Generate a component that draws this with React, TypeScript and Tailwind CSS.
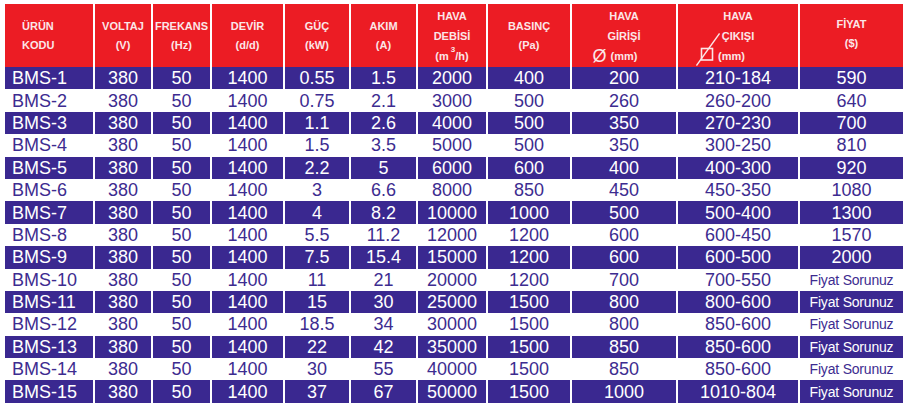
import React from "react";

const cols = "grid grid-cols-[88px_56px_57px_71px_64px_65px_68px_82px_104px_120px_103px] gap-x-[2px]";

const rows: string[][] = [
  ["BMS-1", "380", "50", "1400", "0.55", "1.5", "2000", "400", "200", "210-184", "590"],
  ["BMS-2", "380", "50", "1400", "0.75", "2.1", "3000", "500", "260", "260-200", "640"],
  ["BMS-3", "380", "50", "1400", "1.1", "2.6", "4000", "500", "350", "270-230", "700"],
  ["BMS-4", "380", "50", "1400", "1.5", "3.5", "5000", "500", "350", "300-250", "810"],
  ["BMS-5", "380", "50", "1400", "2.2", "5", "6000", "600", "400", "400-300", "920"],
  ["BMS-6", "380", "50", "1400", "3", "6.6", "8000", "850", "450", "450-350", "1080"],
  ["BMS-7", "380", "50", "1400", "4", "8.2", "10000", "1000", "500", "500-400", "1300"],
  ["BMS-8", "380", "50", "1400", "5.5", "11.2", "12000", "1200", "600", "600-450", "1570"],
  ["BMS-9", "380", "50", "1400", "7.5", "15.4", "15000", "1200", "600", "600-500", "2000"],
  ["BMS-10", "380", "50", "1400", "11", "21", "20000", "1200", "700", "700-550", "Fiyat Sorunuz"],
  ["BMS-11", "380", "50", "1400", "15", "30", "25000", "1500", "800", "800-600", "Fiyat Sorunuz"],
  ["BMS-12", "380", "50", "1400", "18.5", "34", "30000", "1500", "800", "850-600", "Fiyat Sorunuz"],
  ["BMS-13", "380", "50", "1400", "22", "42", "35000", "1500", "850", "850-600", "Fiyat Sorunuz"],
  ["BMS-14", "380", "50", "1400", "30", "55", "40000", "1500", "850", "850-600", "Fiyat Sorunuz"],
  ["BMS-15", "380", "50", "1400", "37", "67", "50000", "1500", "1000", "1010-804", "Fiyat Sorunuz"],
];

function SquareIcon() {
  return (
    <svg width="24" height="33" viewBox="0 0 24 33">
      <rect x="5.5" y="15.5" width="11" height="11.5" fill="none" stroke="#fbe6e8" strokeWidth="1.6" />
      <line x1="0.5" y1="32.5" x2="23.5" y2="0.5" stroke="#fbe6e8" strokeWidth="1.3" />
    </svg>
  );
}

function HeaderCell({ children, className = "" }: { children: React.ReactNode; className?: string }) {
  return (
    <div className={"bg-[#ec1c24] flex flex-col justify-center items-center text-[11px] leading-[19px] font-bold text-[#fbe6e8] " + className}>
      {children}
    </div>
  );
}

export default function App() {
  return (
    <div className="w-[909px] h-[411px] bg-white pt-[4px] pl-[5px]" style={{ fontFamily: '"Liberation Sans", Arial, sans-serif' }}>
      <div className={cols + " h-[63px]"}>
        <HeaderCell className="!items-start pl-[17px]">
          <span>ÜRÜN</span>
          <span>KODU</span>
        </HeaderCell>
        <HeaderCell>
          <span>VOLTAJ</span>
          <span>(V)</span>
        </HeaderCell>
        <HeaderCell>
          <span>FREKANS</span>
          <span>(Hz)</span>
        </HeaderCell>
        <HeaderCell>
          <span>DEVİR</span>
          <span>(d/d)</span>
        </HeaderCell>
        <HeaderCell>
          <span>GÜÇ</span>
          <span>(kW)</span>
        </HeaderCell>
        <HeaderCell>
          <span>AKIM</span>
          <span>(A)</span>
        </HeaderCell>
        <HeaderCell className="leading-[20px]">
          <span>HAVA</span>
          <span>DEBİSİ</span>
          <span className="flex items-start">
            <span>(m</span>
            <span className="text-[8px] leading-[10px] ml-[2px] -mt-[1px]">3</span>
            <span>/h)</span>
          </span>
        </HeaderCell>
        <HeaderCell>
          <span>BASINÇ</span>
          <span>(Pa)</span>
        </HeaderCell>
        <HeaderCell className="leading-[20px]">
          <span>HAVA</span>
          <span>GİRİŞİ</span>
          <span className="flex items-center mr-[18px]">
            <span className="text-[18px] font-normal leading-[18px] mr-[4px]">Ø</span>
            <span>(mm)</span>
          </span>
        </HeaderCell>
        <HeaderCell className="leading-[20px] relative">
          <span>HAVA</span>
          <span>ÇIKIŞI</span>
          <span className="self-start ml-[40px]">(mm)</span>
          <div className="absolute left-[18px] top-[29px]">
            <SquareIcon />
          </div>
        </HeaderCell>
        <HeaderCell className="pb-[3px]">
          <span>FİYAT</span>
          <span>($)</span>
        </HeaderCell>
      </div>
      {rows.map((r, i) => {
        const purple = i % 2 === 0;
        return (
          <div key={i} className={cols + " h-[22.4px]"}>
            {r.map((c, j) => {
              const small = c === "Fiyat Sorunuz";
              return (
                <div
                  key={j}
                  className={
                    (purple ? "bg-[#3a2890] text-white " : "bg-white text-[#3d2c90] ") +
                    "flex items-center leading-none " +
                    (j === 0 ? "justify-start pl-[7px] " : "justify-center ") +
                    (small ? "text-[14px] tracking-[-0.2px]" : "text-[18px]")
                  }
                >
                  {c}
                </div>
              );
            })}
          </div>
        );
      })}
    </div>
  );
}
